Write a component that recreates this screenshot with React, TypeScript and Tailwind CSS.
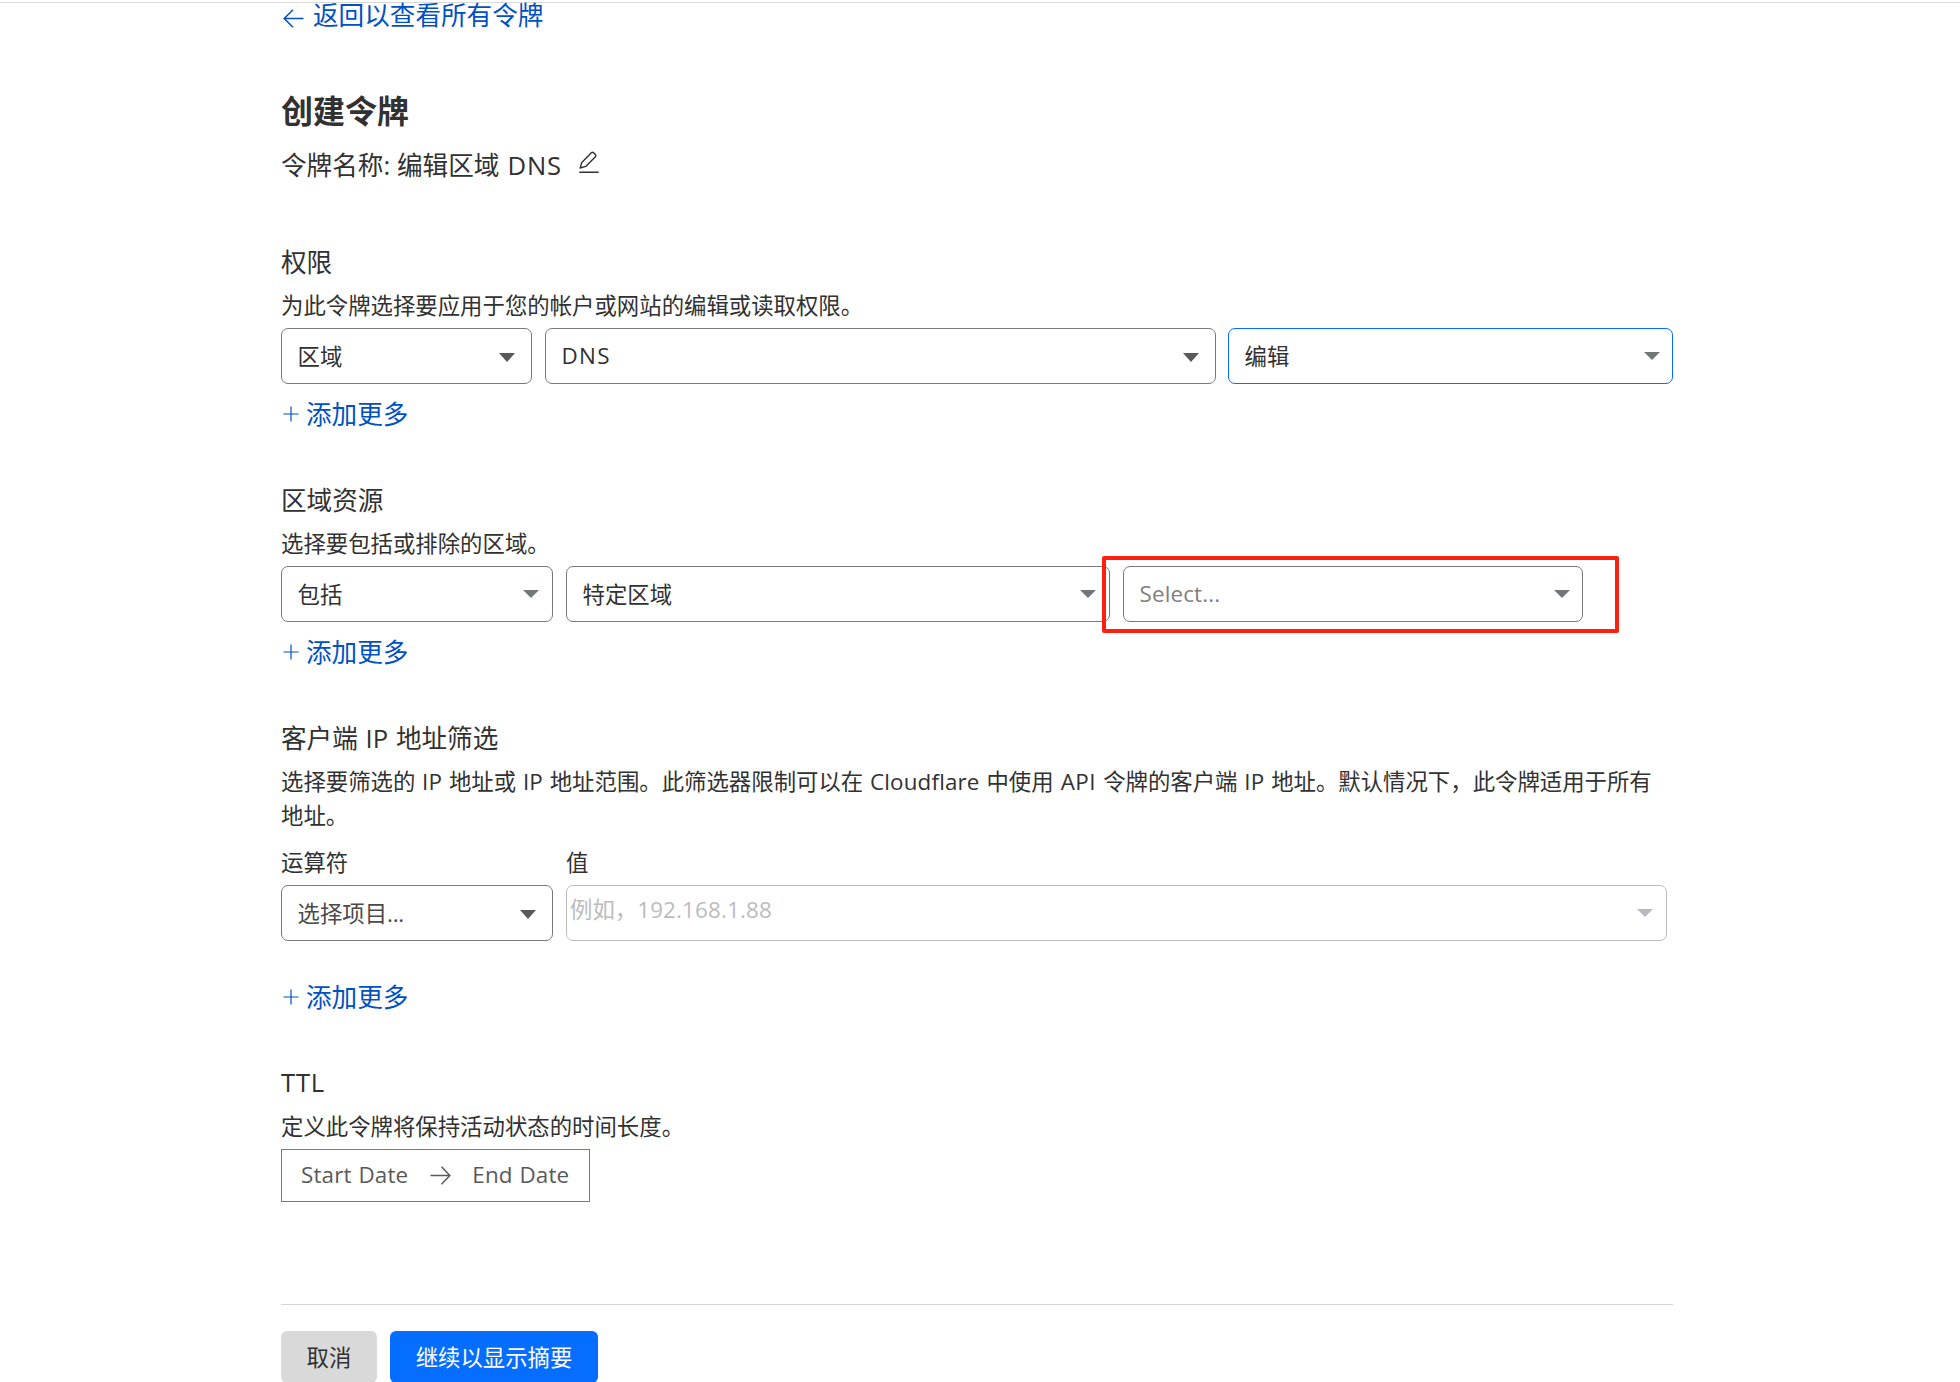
import type { ReactNode } from 'react'
import clsx from 'clsx'

function Latin({ children, className = 'tracking-[.16px]' }: { children: ReactNode; className?: string }) {
  return <span className={clsx("font-['Open_Sans',sans-serif] [word-spacing:.8px]", className)}>{children}</span>
}

function Caret({ className }: { className?: string }) {
  return (
    <svg viewBox="0 0 16 9" preserveAspectRatio="none" className={clsx('shrink-0', className)}>
      <path d="M0 0h16L8 9z" fill="currentColor" />
    </svg>
  )
}

interface SelectProps {
  children: ReactNode
  className?: string
  caretClassName?: string
  variant?: 'native' | 'custom'
}

function Select({ children, className, caretClassName = 'mr-[13px]', variant = 'custom' }: SelectProps) {
  return (
    <div className={clsx('flex h-14 shrink-0 items-center justify-between rounded-[7px] border bg-white pl-[15.5px]', className)}>
      <span>{children}</span>
      {variant === 'native' ? (
        <Caret className="mt-[3px] mr-4 h-[9px] w-4 text-[#595959]" />
      ) : (
        <Caret className={clsx('h-2 w-4 text-[#72777b]', caretClassName)} />
      )}
    </div>
  )
}

function AddMore({ className }: { className?: string }) {
  return (
    <a className={clsx('flex h-10 items-center pl-[2px] text-[25.6px] text-[#0051c3]', className)}>
      <svg viewBox="0 0 16 16" className="mr-[7px] h-4 w-4" fill="none" stroke="currentColor" strokeWidth="1.2">
        <path d="M8 .5v15M.5 8h15" />
      </svg>
      <span className="pb-[2px] leading-[38px]">添加更多</span>
    </a>
  )
}

function SectionHeader({ title, children }: { title: ReactNode; children: ReactNode }) {
  return (
    <>
      <h2 className="h-10 text-[25.6px] leading-[38px]">{title}</h2>
      <p className="mt-[6px] mb-[7px] leading-[33px]">{children}</p>
    </>
  )
}

export default function App() {
  return (
    <div className="h-[1382px] overflow-hidden bg-white pt-[2px] font-['Noto_Sans_CJK_SC',sans-serif] text-[22.4px] text-[#313131]">
      <div className="border-t border-[#d9d9d9]" />
      <main className="ml-[281px] w-[1392px]">
        <a className="flex h-[26px] items-center pl-[2px] text-[25.6px] text-[#0051c3]">
          <svg viewBox="0 0 21 19" className="mt-[5px] mr-[9px] h-[19px] w-[21px]" fill="none" stroke="currentColor" strokeWidth="1.5">
            <path d="M20.5 9.5H1.2M10 .8L1.2 9.5l8.8 8.7" />
          </svg>
          <span className="pb-1 leading-[26px]">返回以查看所有令牌</span>
        </a>

        <h1 className="mt-[59px] h-11 text-[32px] leading-[42px] font-bold">创建令牌</h1>
        <div className="mt-[13px] flex h-10 items-center text-[25.6px] leading-10">
          <span>
            令牌名称<Latin className="tracking-[-.3px]">: </Latin>编辑区域<Latin className="tracking-[.8px]"> DNS</Latin>
          </span>
          <svg viewBox="0 0 20 23" className="mb-[5px] ml-[17px] h-[23px] w-5" fill="none" stroke="currentColor" strokeWidth="1.4" strokeLinejoin="round">
            <path d="M1.2 17l1.6-5.6L12.6 1.6q.9-.7 1.8 0l2.2 2.2q.7.9 0 1.8L6.8 15.4zM.3 21.3h19.4" />
          </svg>
        </div>

        <section className="mt-[57px]">
          <SectionHeader title="权限">为此令牌选择要应用于您的帐户或网站的编辑或读取权限。</SectionHeader>
          <div className="flex">
            <Select variant="native" className="w-[251px] border-[#797979]">区域</Select>
            <Select variant="native" className="ml-[13px] w-[671px] border-[#797979]">
              <span className="block pb-[2px]"><Latin className="tracking-[1.3px]">DNS</Latin></span>
            </Select>
            <Select className="ml-3 w-[445px] border-[#056dff]" caretClassName="mr-3">编辑</Select>
          </div>
          <AddMore className="mt-[10px]" />
        </section>

        <section className="mt-[46px]">
          <SectionHeader title="区域资源">选择要包括或排除的区域。</SectionHeader>
          <div className="flex">
            <Select className="w-[272px] border-[#797979]">包括</Select>
            <Select className="ml-[13px] w-[544px] border-[#797979]">特定区域</Select>
            <div className="relative ml-[13px]">
              <Select className="w-[460px] border-[#797979]" caretClassName="mr-3">
                <span className="block pb-[2px] text-[#808080]"><Latin>Select...</Latin></span>
              </Select>
              {/* highlight around the zone picker */}
              <div className="absolute -top-[10px] -left-[21px] h-[77px] w-[517px] rounded-[2px] border-4 border-[#ff2011]" />
            </div>
          </div>
          <AddMore className="mt-[10px]" />
        </section>

        <section className="mt-[46px]">
          <SectionHeader title={<>客户端<Latin> IP </Latin>地址筛选</>}>
            选择要筛选的<Latin> IP </Latin>地址或<Latin> IP </Latin>地址范围。此筛选器限制可以在<Latin> Cloudflare </Latin>中使用<Latin className="tracking-[.5px]"> API </Latin>令牌的客户端<Latin> IP </Latin>地址。默认情况下，此令牌适用于所有<br />地址。
          </SectionHeader>
          <div className="mt-[14px] flex gap-[13px] leading-[33px]">
            <div>
              <div className="mb-[7px]">运算符</div>
              <Select variant="native" className="w-[272px] border-[#797979]">
                <span className="text-[#4a4a4a]">选择项目<Latin className="tracking-[-.3px]">...</Latin></span>
              </Select>
            </div>
            <div>
              <div className="mb-[7px]">值</div>
              <div className="flex h-14 w-[1101px] items-center justify-between rounded-[7px] border border-[#bcbcbc] pr-[13px] pl-[3px]">
                <span className="mb-2 text-[#bcbcbc]">例如，<Latin>192.168.1.88</Latin></span>
                <Caret className="h-2 w-4 text-[#b6b9bd]" />
              </div>
            </div>
          </div>
          <AddMore className="mt-9" />
        </section>

        <section className="mt-[46px]">
          <SectionHeader title={<span className="block leading-[35px]"><Latin className="tracking-[.8px]">TTL</Latin></span>}>
            定义此令牌将保持活动状态的时间长度。
          </SectionHeader>
          <div className="flex h-[53px] w-[309px] items-center border border-[#797979] pl-[19px] text-[#595959]">
            <Latin className="pb-[2px] tracking-[.16px]">Start Date</Latin>
            <svg viewBox="0 0 21 19" className="mr-[21px] ml-[22px] h-[19px] w-[21px]" fill="none" stroke="currentColor" strokeWidth="1.5">
              <path d="M.5 9.5h19.3M11.5 .8l8.3 8.7-8.3 8.7" />
            </svg>
            <Latin className="pb-[2px] tracking-[.16px]">End Date</Latin>
          </div>
        </section>

        <footer className="mt-[102px] flex gap-[13px] border-t border-[#d5d5d5] pt-[26px]">
          <button className="h-[52px] w-24 rounded-[6px] bg-[#d9d9d9]">取消</button>
          <button className="h-[52px] w-[208px] rounded-[6px] bg-[#056dff] text-white">继续以显示摘要</button>
        </footer>
      </main>
    </div>
  )
}
